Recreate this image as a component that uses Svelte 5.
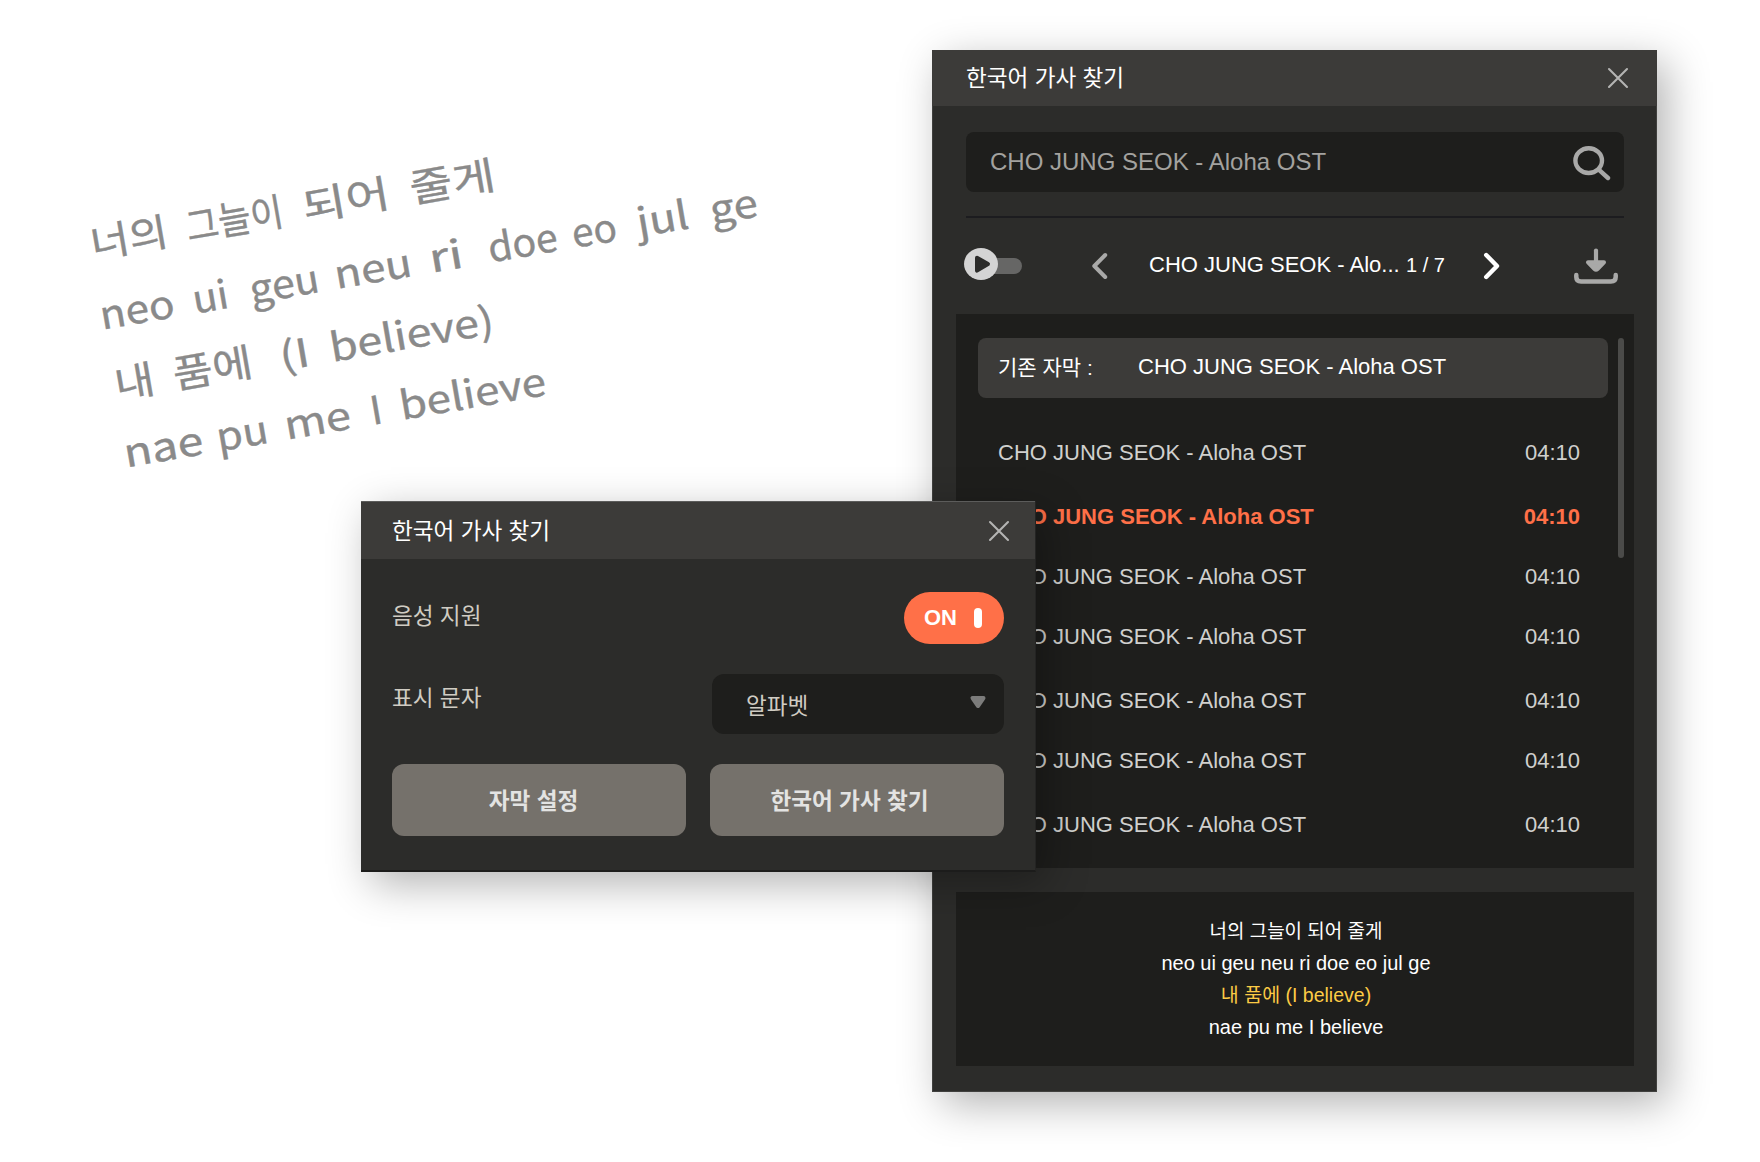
<script>
  const track = 'CHO JUNG SEOK - Aloha OST';

  const rows = [
    { size: 'first' },
    { size: 'tall', active: true },
    { size: 'short' },
    { size: 'short' },
    { size: 'tall' },
    { size: 'short' },
    { size: 'tall' }
  ].map((row) => ({ ...row, title: track, time: '04:10' }));

  const lyrics = [
    { text: '너의 그늘이 되어 줄게', kind: 'hangul' },
    { text: 'neo ui geu neu ri doe eo jul ge', kind: 'latin' },
    { text: '내 품에 (I believe)', kind: 'current' },
    { text: 'nae pu me I believe', kind: 'latin' }
  ];

  // Each word of the slanted note: [text, start, width] along its baseline.
  const note = [
    { y: 0, words: [['너의', -1, 78], ['그늘이', 96, 98], ['되어', 214, 88], ['줄게', 323, 86]] },
    {
      y: 72,
      words: [
        ['neo', -4, 75], ['ui', 90, 36], ['geu', 148, 70], ['neu', 234, 78], ['ri', 330, 34],
        ['doe', 390, 70], ['eo', 475, 45], ['jul', 541, 52], ['ge', 615, 48]
      ]
    },
    { y: 143, words: [['내', -1, 40], ['품에', 58, 80], ['(I', 166, 30], ['believe)', 217, 166]] },
    { y: 212, words: [['nae', -4, 80], ['pu', 90, 52], ['me', 159, 67], ['I', 246, 12], ['believe', 276, 148]] }
  ];
</script>

{#snippet close()}
  <svg class="close" width="22" height="22" viewBox="0 0 22 22">
    <path d="M2 2L20 20M20 2L2 20" fill="none" stroke="#b4b4b3" stroke-width="2.1" stroke-linecap="round" />
  </svg>
{/snippet}

<main>
  <svg class="note" width="760" height="400" viewBox="60 110 760 400">
    <g transform="translate(94 258) rotate(-9.8)">
      {#each note as line}
        {#each line.words as [word, x, width]}
          <text {x} y={line.y} textLength={width} lengthAdjust="spacingAndGlyphs">{word}</text>
        {/each}
      {/each}
    </g>
  </svg>

  <section class="window finder">
    <header>
      <h1>한국어 가사 찾기</h1>
      {@render close()}
    </header>
    <div class="top">
      <div class="search">
        <span>{track}</span>
        <svg width="40" height="38" viewBox="0 0 40 38">
          <ellipse cx="17.7" cy="17.6" rx="13.3" ry="12.4" />
          <path d="M28.3 27.2L37 35" />
        </svg>
      </div>
      <hr />
      <nav>
        <svg class="play" width="60" height="34" viewBox="0 0 60 34">
          <rect x="14" y="11" width="45" height="16" rx="8" fill="#666665" />
          <ellipse cx="18" cy="17" rx="17" ry="16" fill="#d4d4d4" />
          <path d="M14 10.8L25 17L14 23.6Z" fill="#2c2c2a" stroke="#2c2c2a" stroke-width="4" stroke-linejoin="round" />
        </svg>
        <svg class="prev" width="18" height="28" viewBox="0 0 18 28">
          <path d="M15.200 3L4.300 14L15.200 25" fill="none" stroke="#a9a9a8" stroke-width="4" stroke-linecap="round" stroke-linejoin="round" />
        </svg>
        <span class="name">CHO JUNG SEOK - Alo...</span>
        <span class="count">1 / 7</span>
        <svg class="next" width="18" height="28" viewBox="0 0 18 28">
          <path d="M3.2 3L14 14L3.2 25" fill="none" stroke="#ffffff" stroke-width="4.4" stroke-linecap="round" stroke-linejoin="round" />
        </svg>
        <svg class="download" width="46" height="38" viewBox="0 0 46 38">
          <path d="M3.300 28V30Q3.300 34.500 8 34.500H38Q42.700 34.500 42.700 30V28" fill="none" stroke="#a9a9a8" stroke-width="4.500" stroke-linecap="round" />
          <path d="M23 3.500V16" stroke="#a9a9a8" stroke-width="4.200" stroke-linecap="round" />
          <path d="M15 15.300H31L24.500 22Q23 23.500 21.500 22Z" fill="#a9a9a8" stroke="#a9a9a8" stroke-width="4" stroke-linejoin="round" />
        </svg>
      </nav>
    </div>
    <div class="results">
      <div class="list">
        <div class="current">
          <span class="label">기존 자막 :</span>
          <span class="title">{track}</span>
        </div>
        {#each rows as row}
          <div class="row {row.size}" class:active={row.active}>
            <span>{row.title}</span>
            <span>{row.time}</span>
          </div>
        {/each}
      </div>
      <div class="scrollbar"></div>
    </div>
    <div class="lyrics">
      {#each lyrics as line}
        <p class={line.kind}>{line.text}</p>
      {/each}
    </div>
  </section>

  <section class="window settings">
    <header>
      <h1>한국어 가사 찾기</h1>
      {@render close()}
    </header>
    <div class="body">
      <div class="field voice">
        <span class="label">음성 지원</span>
        <div class="switch"><b>ON</b><i></i></div>
      </div>
      <div class="field script">
        <span class="label">표시 문자</span>
        <div class="select">
          <span>알파벳</span>
          <svg width="18" height="14" viewBox="0 0 18 14">
            <path d="M3.500 3H14.500L9 11Z" fill="#7c7c7b" stroke="#7c7c7b" stroke-width="4" stroke-linejoin="round" />
          </svg>
        </div>
      </div>
      <div class="buttons">
        <button>자막 설정</button>
        <button>한국어 가사 찾기</button>
      </div>
    </div>
  </section>
</main>

<style>
  :global(body) {
    background: #fff;
  }
  main {
    position: relative;
    width: 1760px;
    height: 1162px;
    overflow: hidden;
    font-family: 'Liberation Sans', 'Noto Sans CJK KR', sans-serif;
    font-size: 22px;
  }
  main * {
    box-sizing: border-box;
  }
  svg {
    display: block;
    flex: none;
  }
  .note {
    position: absolute;
    left: 60px;
    top: 110px;
  }
  .note text {
    font-family: 'Noto Sans CJK KR', sans-serif;
    font-size: 39px;
    fill: #8a8a8a;
    stroke: #8a8a8a;
    stroke-width: 0.4px;
  }
  .window {
    position: absolute;
    display: flex;
    flex-direction: column;
    background: #2c2c2a;
    box-shadow: 10px 12px 40px rgba(0, 0, 0, 0.3);
  }
  header {
    display: flex;
    align-items: center;
    justify-content: space-between;
    background: #3c3b39;
    color: #fff;
  }
  h1 {
    margin: 0;
    font-size: 22.6px;
    font-weight: 400;
    line-height: 30px;
  }

  .finder {
    left: 932px;
    top: 50px;
    width: 725px;
    height: 1042px;
    border: solid #40403e;
    border-width: 0 1px 1px;
  }
  .finder header {
    height: 56px;
    padding: 0 28px 0 34px;
    margin: 0 -1px;
  }
  .finder h1 {
    padding-top: 1px;
  }
  .finder .close {
    margin-bottom: 1px;
  }
  .top {
    padding: 26px 32px 0 33px;
  }
  .search {
    display: flex;
    align-items: center;
    justify-content: space-between;
    height: 60px;
    padding: 0 13px 0 24px;
    border-radius: 8px;
    background: #1e1e1c;
    color: #a3a29f;
    font-size: 24px;
  }
  .search svg {
    fill: none;
    stroke: #a9a9a8;
    stroke-width: 4.4;
    stroke-linecap: round;
  }
  hr {
    height: 2px;
    margin: 24px 0 0;
    border: 0;
    background: #1c1c1f;
  }
  nav {
    display: flex;
    align-items: center;
    height: 96px;
    color: #fff;
    line-height: 30px;
  }
  .play {
    margin: 0 67px 4px -3px;
  }
  .prev {
    margin-right: 41px;
  }
  .name {
    width: 257px;
    white-space: nowrap;
    padding-bottom: 2px;
  }
  .count {
    width: 77px;
    font-size: 20px;
    padding-bottom: 3px;
  }
  .download {
    margin-left: 72px;
  }
  .results {
    display: flex;
    height: 554px;
    margin: 0 22px 0 23px;
    padding: 24px 10px 0 22px;
    background: #1e1e1c;
  }
  .list {
    width: 630px;
    color: #d0d0ce;
  }
  .current {
    display: flex;
    align-items: center;
    height: 60px;
    padding-left: 20px;
    border-radius: 8px;
    background: #3c3b39;
    color: #fff;
  }
  .current .label {
    width: 140px;
    padding-bottom: 4px;
    font-size: 21px;
  }
  .current .title {
    padding-bottom: 3px;
  }
  .row {
    display: flex;
    align-items: flex-end;
    justify-content: space-between;
    padding: 0 28px 0 20px;
    line-height: 30px;
  }
  .row.first {
    height: 70px;
  }
  .row.tall {
    height: 64px;
  }
  .row.short {
    height: 60px;
  }
  .row.active {
    color: #ff7048;
    font-weight: 700;
  }
  .scrollbar {
    width: 6px;
    height: 220px;
    margin-left: 10px;
    border-radius: 3px;
    background: #4b4b49;
  }
  .lyrics {
    height: 174px;
    margin: 24px 22px 0 23px;
    padding: 23px 0 0 2px;
    background: #1e1e1c;
    color: #fff;
    text-align: center;
  }
  .lyrics p {
    margin: 0;
    font-size: 20px;
    line-height: 32px;
  }
  .lyrics .hangul {
    font-size: 19px;
    padding-top: 2px;
    line-height: 30px;
  }
  .lyrics .current {
    display: block;
    height: auto;
    padding: 0;
    background: none;
    color: #fccb45;
    font-size: 19.5px;
  }

  .settings {
    left: 361px;
    top: 501px;
    width: 675px;
    height: 371px;
    border-bottom: 2px solid #1c1c1b;
    border-right: 1px solid #242423;
  }
  .settings header {
    height: 58px;
    padding: 1px 25px 0 31px;
    border-top: 1px solid #5c5c5b;
  }
  .settings h1 {
    padding-top: 1px;
  }
  .settings .close {
    margin-bottom: 1px;
  }
  .body {
    padding: 33px 31px 0;
  }
  .field {
    display: flex;
    align-items: center;
    justify-content: space-between;
    color: #d0ccc3;
    font-size: 22.6px;
  }
  .voice .label {
    padding-bottom: 8px;
  }
  .script {
    margin-top: 30px;
  }
  .script .label {
    padding-bottom: 16px;
  }
  .switch {
    display: flex;
    align-items: center;
    justify-content: space-between;
    width: 100px;
    height: 52px;
    padding: 0 22px 0 20px;
    border-radius: 26px;
    background: #ff7048;
    color: #fff;
    font-size: 22px;
  }
  .switch i {
    width: 8px;
    height: 20px;
    border-radius: 4px;
    background: #fff;
  }
  .select {
    display: flex;
    align-items: center;
    justify-content: space-between;
    width: 292px;
    height: 60px;
    padding: 0 17px 0 34px;
    border-radius: 12px;
    background: #1e1e1c;
  }
  .select svg {
    margin-bottom: 4px;
  }
  .buttons {
    display: flex;
    gap: 24px;
    margin-top: 30px;
  }
  button {
    width: 294px;
    height: 72px;
    padding: 0 0 1px;
    border: 0;
    border-radius: 12px;
    background: #75716b;
    color: #e3e3e2;
    font: 700 22.6px 'Liberation Sans', 'Noto Sans CJK KR', sans-serif;
  }
  button:first-child {
    padding-right: 11px;
  }
  button:last-child {
    padding-right: 15px;
  }
</style>
